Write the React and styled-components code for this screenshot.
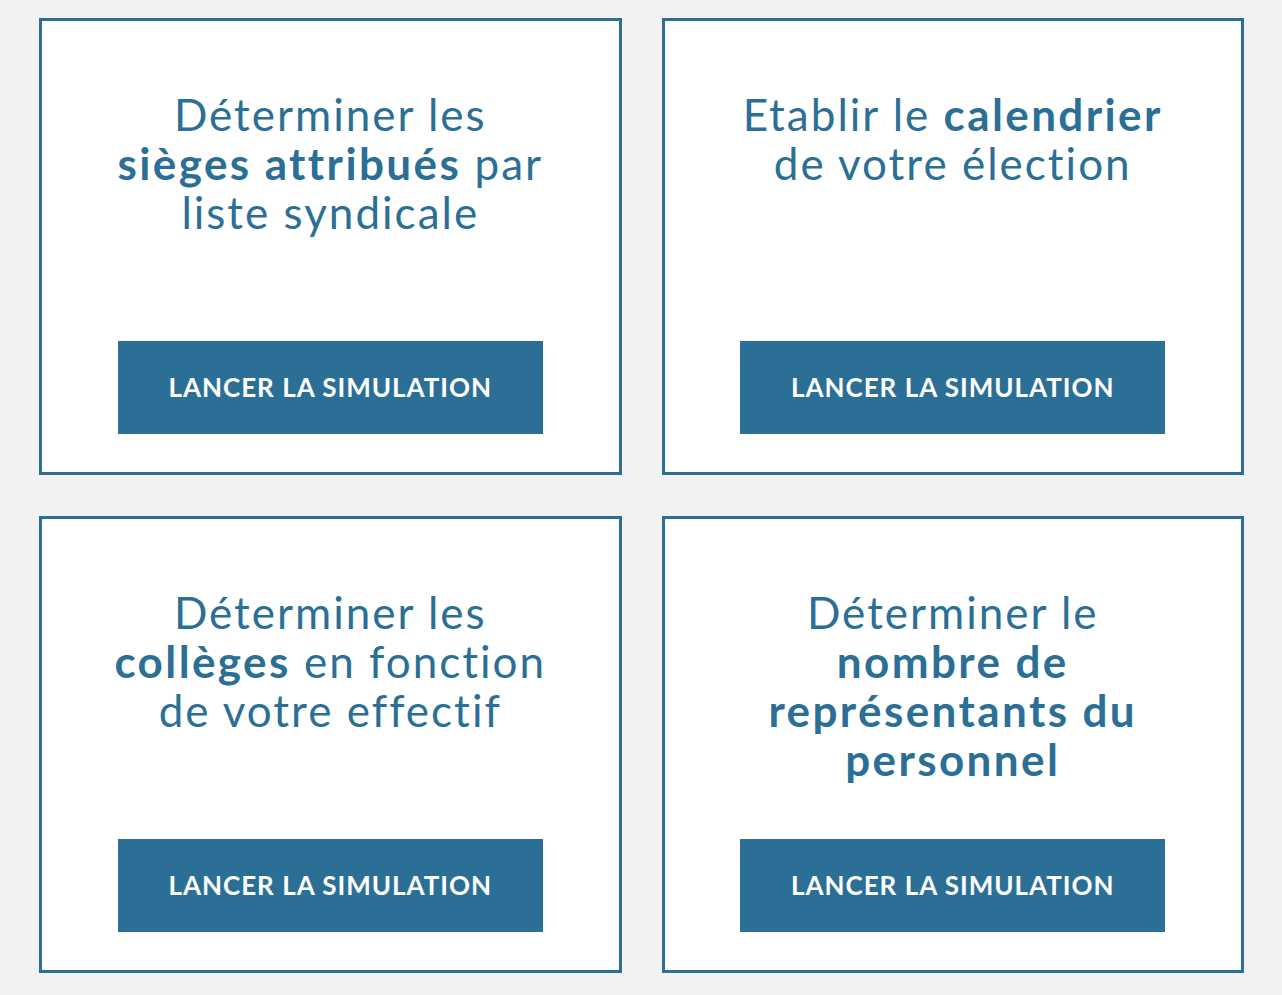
import styled, { createGlobalStyle } from "styled-components";

const Global = createGlobalStyle`
    body{
        margin: 0;
        background: #F2F2F2;
        font-family: 'Lato', 'Liberation Sans', sans-serif;
    }
`;

const cards = [
    [["Déterminer les"], [<b key="b">sièges attribués</b>, " par"], ["liste syndicale"]],
    [["Etablir le ", <b key="b">calendrier</b>], ["de votre élection"]],
    [["Déterminer les"], [<b key="b">collèges</b>, " en fonction"], ["de votre effectif"]],
    [["Déterminer le"], [<b key="b">nombre de</b>], [<b key="b">représentants du</b>], [<b key="b">personnel</b>]],
];

function App () {
    return(
        <Page>
            <Global/>
            <Grid>
                {cards.map((lines, i) => (
                    <Card key={i}>
                        <Title>
                            {lines.map((line, j) => <span key={j}>{line}</span>)}
                        </Title>
                        <Button>LANCER LA SIMULATION</Button>
                    </Card>
                ))}
            </Grid>
        </Page>
    )
}

export default App;

const Page = styled.div`
    width: 100%;
    min-height: 100vh;
    box-sizing: border-box;
    padding: 18px 38px 22px 39px;
`;

const Grid = styled.div`
    display: grid;
    grid-template-columns: 1fr 1fr;
    column-gap: 40px;
    row-gap: 41px;
`;

const Card = styled.div`
    height: 457px;
    box-sizing: border-box;
    background: #FFFFFF;
    border: 3px solid #2B6F97;
    display: flex;
    flex-direction: column;
    align-items: center;
    padding: 69px 0 38px;
`;

const Title = styled.h2`
    margin: 0;
    display: flex;
    flex-direction: column;
    align-items: center;
    font-size: 44px;
    line-height: 49px;
    font-weight: 400;
    letter-spacing: 2px;
    color: #2B6F97;
    text-align: center;

    b{
        font-weight: 700;
        letter-spacing: 2.4px;
    }
`;

const Button = styled.button`
    margin-top: auto;
    width: 425px;
    height: 93px;
    padding: 0 0 2px;
    border: none;
    background: #2B6F97;
    color: #FFFFFF;
    font-family: 'Lato', 'Liberation Sans', sans-serif;
    font-weight: 700;
    font-size: 26px;
    letter-spacing: 1px;
    cursor: pointer;
`;
